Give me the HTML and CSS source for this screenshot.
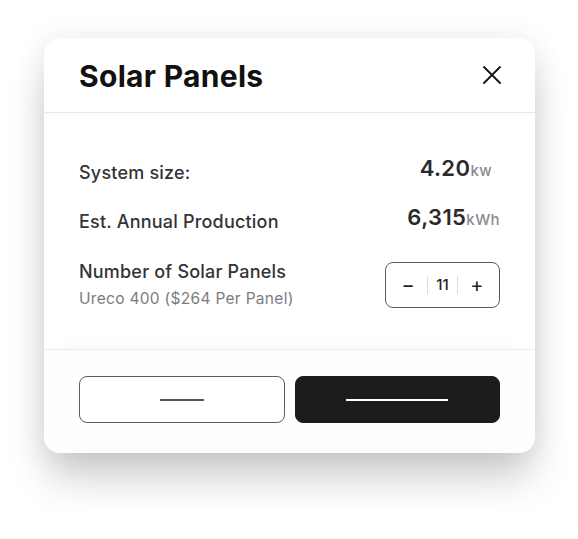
FILE: index.html
```html
<!DOCTYPE html>
<html lang="en">
<head>
    <meta charset="UTF-8">
    <meta name="viewport" content="width=device-width, initial-scale=1.0">
    <title>Solar Panels</title>
    <link rel="stylesheet" href="styles.css">
</head>
<body>
    <div class="page">
        <div class="modal">
            <div class="modal-header">
                <h1 class="modal-title">Solar Panels</h1>
                <button class="close-btn" aria-label="Close">
                    <svg width="20" height="20" viewBox="0 0 20 20" fill="none" stroke="#111" stroke-width="1.8" stroke-linecap="round">
                        <path d="M2 2 L18 18 M18 2 L2 18"/>
                    </svg>
                </button>
            </div>

            <div class="modal-body">
                <div class="info-row">
                    <span class="info-label">System size:</span>
                    <span class="info-value value-kw">4.20<span class="unit">kw</span></span>
                </div>
                <div class="info-row">
                    <span class="info-label">Est. Annual Production</span>
                    <span class="info-value">6,315<span class="unit">kWh</span></span>
                </div>
                <div class="panel-row">
                    <div>
                        <div class="info-label">Number of Solar Panels</div>
                        <div class="panel-sub">Ureco 400 ($264 Per Panel)</div>
                    </div>
                    <div class="stepper">
                        <button class="step-btn">&minus;</button>
                        <span class="step-sep"></span>
                        <span class="step-count">11</span>
                        <span class="step-sep"></span>
                        <button class="step-btn">+</button>
                    </div>
                </div>
            </div>

            <div class="modal-footer">
                <button class="btn btn-outline"><span class="btn-line"></span></button>
                <button class="btn btn-dark"><span class="btn-line"></span></button>
            </div>
        </div>
    </div>
</body>
</html>
```

FILE: styles.css
```css
:root {
    --text-color: #111111;
    --label-color: #333336;
    --muted: #8a8a8e;
    --border: #5b5b60;
    --dark: #1c1c1e;
}

* {
    margin: 0;
    padding: 0;
    box-sizing: border-box;
    font-family: Inter, 'Noto Sans', sans-serif;
}

body {
    background: #ffffff;
    color: var(--text-color);
}

.page {
    min-height: 100vh;
    padding: 38px 43px 0 44px;
}

.modal {
    width: 491px;
    background: white;
    border-radius: 16px;
    box-shadow: 0 0 30px rgba(0,0,0,0.08), 0 28px 40px -4px rgba(0,0,0,0.2);
    overflow: hidden;
}

.modal-header {
    height: 75px;
    padding: 0 33px 0 35px;
    display: flex;
    justify-content: space-between;
    align-items: center;
    border-bottom: 1px solid #e8e8ea;
    box-shadow: 0 2px 3px rgba(0,0,0,0.02);
}

.modal-title {
    font-size: 30px;
    font-weight: 700;
    letter-spacing: 0.3px;
    padding-top: 2px;
}

.close-btn {
    background: none;
    border: none;
    width: 20px;
    height: 20px;
    display: flex;
    cursor: pointer;
}

.modal-body {
    height: 236px;
    padding: 45px 35px 0;
}

.info-row {
    display: flex;
    justify-content: space-between;
    align-items: baseline;
    height: 49px;
}

.info-label {
    font-size: 18px;
    font-weight: 500;
    letter-spacing: 0.2px;
    color: var(--label-color);
}

.info-value {
    font-size: 22px;
    font-weight: 600;
    letter-spacing: 0.4px;
    color: #2a2a2d;
    position: relative;
    top: -3px;
}

.value-kw {
    margin-right: 8px;
}

.unit {
    font-size: 15px;
    font-weight: 500;
    color: var(--muted);
}

.panel-row {
    display: flex;
    justify-content: space-between;
    align-items: center;
    margin-top: 5px;
}

.panel-sub {
    font-size: 15.5px;
    letter-spacing: 0.3px;
    color: #7b7b80;
    margin-top: 7px;
}

.stepper {
    width: 115px;
    height: 46px;
    border: 1.2px solid var(--border);
    border-radius: 8px;
    display: flex;
    align-items: center;
    justify-content: space-between;
    padding: 0 12px;
}

.step-btn {
    background: none;
    border: none;
    font-size: 20px;
    color: #222;
    width: 20px;
    cursor: pointer;
}

.step-sep {
    width: 1px;
    height: 18px;
    background: #dcdcdf;
}

.step-count {
    font-size: 15px;
    font-weight: 500;
    color: #222;
}

.modal-footer {
    height: 104px;
    padding: 26px 35px 0;
    display: flex;
    gap: 10px;
    border-top: 1px solid #ececee;
    box-shadow: 0 -6px 14px -8px rgba(0,0,0,0.06);
    background: #fdfefe;
}

.btn {
    flex: 1 1 0;
    min-width: 0;
    height: 47px;
    border-radius: 8px;
    display: flex;
    align-items: center;
    justify-content: center;
    cursor: pointer;
}

.btn-outline {
    background: white;
    border: 1.5px solid var(--border);
}

.btn-outline .btn-line {
    width: 44px;
    height: 2px;
    background: #55555a;
}

.btn-dark {
    background: var(--dark);
    border: 1.5px solid var(--dark);
}

.btn-dark .btn-line {
    width: 102px;
    height: 2px;
    background: white;
}
```
